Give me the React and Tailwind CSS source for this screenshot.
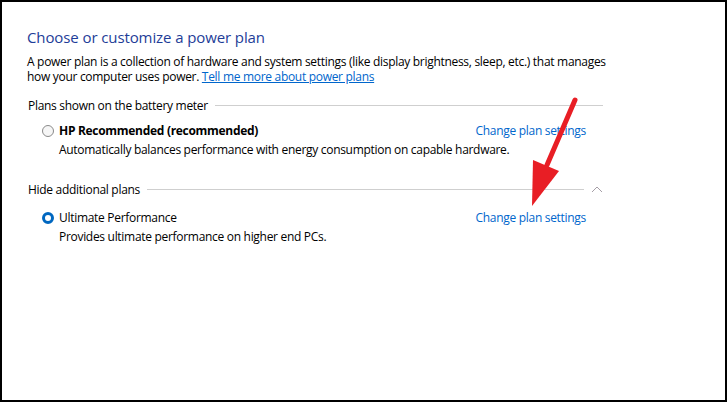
import React from "react";

const font = { fontFamily: '"Segoe UI", "Open Sans", "Noto Sans", sans-serif' };

const Radio = ({ checked }) =>
  checked ? (
    <span className="w-[12px] h-[12px] rounded-full border-[3px] border-[#0067c0] bg-white shrink-0" />
  ) : (
    <span className="w-[12px] h-[12px] rounded-full border border-[#8a8a8a] bg-[#f6f6f6] shrink-0" />
  );

const SectionHeader = ({ label, chevron }) => (
  <div className="flex items-center h-[15px]">
    <span className="pl-px">{label}</span>
    <div className="flex-1 h-px bg-[#cfcfcf] ml-[7px]" />
    {chevron && (
      <svg width="12" height="7" viewBox="0 0 12 7" className="ml-[7px] mr-[-1px]">
        <path d="M1 6 L6 1 L11 6" fill="none" stroke="#a59ea6" strokeWidth="1" />
      </svg>
    )}
  </div>
);

const Plan = ({ name, desc, checked, bold }) => (
  <div className="pl-[15px] pr-[17px]">
    <div className="flex items-center justify-between h-[15px]">
      <div className="flex items-center gap-[5px]">
        <Radio checked={checked} />
        <span className={bold ? "font-bold" : ""}>{name}</span>
      </div>
      <a className="text-[#0066cc] cursor-pointer">Change plan settings</a>
    </div>
    <p className="pl-[17px] mt-[4px] leading-[15px]">{desc}</p>
  </div>
);

export default function App() {
  return (
    <div className="w-[727px] h-[402px] bg-white border-2 border-black relative overflow-hidden" style={font}>
      <div className="pl-[25px] pt-[24px] w-[601px] text-[12px] tracking-[-0.3px] text-black leading-[15px]">
        <h1 className="text-[15px] tracking-[-0.1px] leading-[22px] text-[#1e3d98]">Choose or customize a power plan</h1>
        <p className="mt-[6px] leading-[15px] whitespace-nowrap">
          A power plan is a collection of hardware and system settings (like display brightness, sleep, etc.) that manages
          <br />
          how your computer uses power.{" "}
          <a className="text-[#0066cc] underline cursor-pointer">Tell me more about power plans</a>
        </p>

        <div className="mt-[14px]">
          <SectionHeader label="Plans shown on the battery meter" />
        </div>
        <div className="mt-[10px]">
          <Plan
            bold
            name="HP Recommended (recommended)"
            desc="Automatically balances performance with energy consumption on capable hardware."
          />
        </div>

        <div className="mt-[25px] pr-[1px]">
          <SectionHeader label="Hide additional plans" chevron />
        </div>
        <div className="mt-[13px]">
          <Plan checked name="Ultimate Performance" desc="Provides ultimate performance on higher end PCs." />
        </div>
      </div>

      {/* red annotation arrow */}
      <svg className="absolute left-0 top-0 pointer-events-none" width="727" height="402" viewBox="0 0 727 402">
        <line x1="573" y1="98" x2="545" y2="163" stroke="#e81e25" strokeWidth="5" strokeLinecap="round" />
        <polygon points="531,158 557,169 530,204" fill="#e81e25" />
      </svg>
    </div>
  );
}
